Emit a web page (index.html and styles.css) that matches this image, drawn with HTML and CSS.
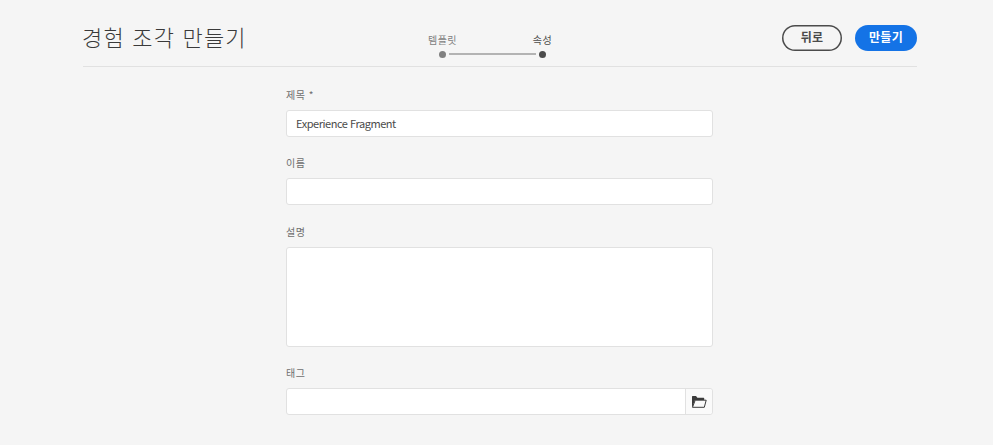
FILE: index.html
```html
<!DOCTYPE html>
<html lang="ko">
<head>
<meta charset="utf-8">
<title>경험 조각 만들기</title>
<link rel="stylesheet" href="styles.css">
</head>
<body>
<header class="header">
  <h1 class="title">경험 조각 만들기</h1>
  <ol class="steps">
    <li class="step"><span class="step-label">템플릿</span><i class="dot"></i></li>
    <li class="line"></li>
    <li class="step current"><span class="step-label">속성</span><i class="dot"></i></li>
  </ol>
  <div class="actions">
    <button class="button">뒤로</button>
    <button class="button primary">만들기</button>
  </div>
</header>
<main class="form">
  <div class="field">
    <label class="label" for="title">제목 *</label>
    <div class="control" id="title">Experience Fragment</div>
  </div>
  <div class="field">
    <label class="label" for="name">이름</label>
    <div class="control" id="name"></div>
  </div>
  <div class="field">
    <label class="label" for="description">설명</label>
    <div class="control area" id="description"></div>
  </div>
  <div class="field">
    <label class="label" for="tags">태그</label>
    <div class="control picker" id="tags">
      <span class="browse">
        <svg width="16" height="14" viewBox="0 0 16 14">
          <path d="M1 12.2V1.6Q1 1 1.6 1H5l1.4 1.7h6.2q.6 0 .6.6V5H4L1.3 12.2z" fill="#3c3c3c"/>
          <path d="M4.2 5.2h11l-1.9 7.1H1.5z" fill="#fafafa" stroke="#3c3c3c" stroke-width="1" stroke-linejoin="round"/>
        </svg>
      </span>
    </div>
  </div>
</main>
</body>
</html>
```
FILE: styles.css
```css
* { box-sizing: border-box; }
body {
  margin: 0;
  height: 445px;
  overflow: hidden;
  background: #f5f5f5;
  color: #4b4b4b;
  font-family: "Noto Sans CJK KR", sans-serif;
}
.header {
  display: grid;
  grid-template-columns: 345px 1fr auto;
  width: 834px;
  height: 67px;
  margin-left: 83px;
  border-bottom: 1px solid #e1e1e1;
}
.title {
  margin: 19px 0 0 -1px;
  color: #3a3a3a;
  font-size: 22px;
  line-height: 34px;
  font-weight: 300;
  letter-spacing: 1.2px;
  white-space: nowrap;
}
.steps {
  display: flex;
  margin: 33px 0 0;
  padding: 0;
  list-style: none;
}
.step {
  display: flex;
  flex-direction: column;
  align-items: center;
  width: 29px;
  height: 26px;
  color: #808080;
}
.current { color: #4b4b4b; }
.step-label {
  height: 18px;
  font-size: 10px;
  line-height: 14px;
  letter-spacing: 0.5px;
  white-space: nowrap;
}
.dot {
  width: 7px;
  height: 7px;
  border-radius: 50%;
  background: currentColor;
}
.line {
  width: 87px;
  height: 2px;
  margin: 20px -8px 0;
  background: #b3b3b3;
}
.actions {
  display: flex;
  gap: 13px;
  padding-top: 25px;
}
.button {
  width: 60px;
  height: 26px;
  padding: 0 0 2px;
  border: 0;
  border-radius: 13px;
  background: transparent;
  box-shadow: inset 0 0 0 1.5px #4b4b4b;
  color: #4b4b4b;
  font: 700 12px/18px "Noto Sans CJK KR", sans-serif;
  letter-spacing: 0.3px;
}
.primary {
  width: 62px;
  background: #1473e6;
  box-shadow: none;
  color: #fff;
}
.form {
  display: flex;
  flex-direction: column;
  gap: 18.4px;
  width: 427px;
  margin: 20px 0 0 286px;
}
.field { display: flex; flex-direction: column; }
.label {
  height: 23px;
  color: #6e6e6e;
  font-size: 10px;
  line-height: 15px;
  letter-spacing: 0.5px;
}
.control {
  height: 27px;
  padding: 0 9px;
  border: 1px solid #e1e1e1;
  border-radius: 3px;
  background: #fff;
  font-size: 11px;
  line-height: 24px;
  letter-spacing: -0.46px;
}
.area { height: 100px; }
.picker {
  display: flex;
  justify-content: flex-end;
  padding: 0;
}
.browse {
  display: flex;
  align-items: center;
  justify-content: center;
  width: 27px;
  border-left: 1px solid #e1e1e1;
  border-radius: 0 3px 3px 0;
  background: #fafafa;
}
```
